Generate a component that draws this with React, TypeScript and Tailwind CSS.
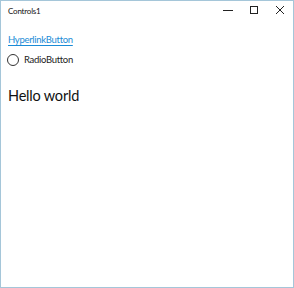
export default function App() {
  return (
    <div
      className="w-[294px] h-[288px] border border-[#a5c6d9] bg-white flex flex-col text-black"
      style={{ fontFamily: 'Lato, "Noto Sans", sans-serif' }}
    >
      <div className="h-[30px] flex items-start">
        <span className="pl-[7px] pt-[4px] text-[8px] leading-[12px] tracking-[-0.2px] text-[#111]">Controls1</span>
        <div className="ml-auto flex">
          <Cap>
            <svg width="10" height="10" viewBox="0 0 10 10">
              <line x1="0" y1="5.5" x2="10" y2="5.5" stroke="#222" strokeWidth="1" />
            </svg>
          </Cap>
          <Cap>
            <svg width="10" height="10" viewBox="0 0 10 10">
              <rect x="1.5" y="1.5" width="7" height="7" fill="none" stroke="#222" strokeWidth="1" />
            </svg>
          </Cap>
          <Cap>
            <svg width="10" height="10" viewBox="0 0 10 10">
              <path d="M1 1 L9 9 M9 1 L1 9" stroke="#222" strokeWidth="1" />
            </svg>
          </Cap>
        </div>
      </div>

      <div className="flex flex-col items-start px-[7px]">
        <a className="mt-[2px] text-[9.5px] leading-[14px] tracking-[-0.3px] text-[#1a8bd6] underline underline-offset-[2px]">
          HyperlinkButton
        </a>
        <label className="mt-[6px] flex items-center -ml-[1px]">
          <span className="w-[12px] h-[12px] rounded-full border-[1.5px] border-[#333]" />
          <span className="ml-[5px] text-[9.5px] leading-[14px] tracking-[-0.3px] text-[#222]">RadioButton</span>
        </label>
        <p className="mt-[19px] text-[14.5px] leading-[20px] tracking-[-0.2px] text-[#111]">Hello world</p>
      </div>
    </div>
  );
}

function Cap({ children }: { children: React.ReactNode }) {
  return <div className="w-[26px] h-[17px] flex items-center justify-center">{children}</div>;
}
